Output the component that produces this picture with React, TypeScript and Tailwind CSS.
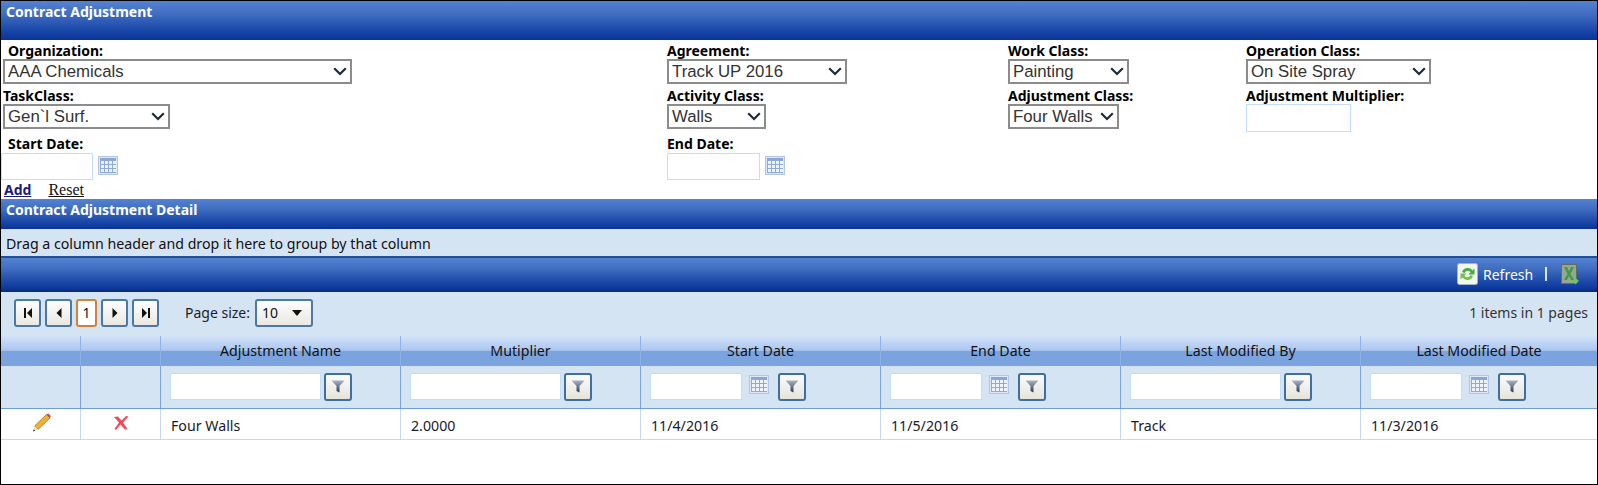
import React from "react";

const Chevron = () => (
  <svg width="14" height="9" viewBox="0 0 14 9" className="absolute right-[5px] top-[8px] pointer-events-none">
    <path d="M1.2 1.2 L7 7 L12.8 1.2" fill="none" stroke="#1f2a36" strokeWidth="2.2" />
  </svg>
);

const Sel = ({ v, w }: { v: string; w: string }) => (
  <div className={`relative h-[25px] ${w}`}>
    <select
      defaultValue={v}
      className="w-full h-full appearance-none bg-white border-2 border-[#8c8c8c] pl-[3px] text-[16.8px] leading-[21px] text-[#333] font-['Liberation_Sans',sans-serif] outline-none"
    >
      <option>{v}</option>
    </select>
    <Chevron />
  </div>
);

const Label = ({ children, cls = "" }: { children: React.ReactNode; cls?: string }) => (
  <div className={`text-[14px] leading-[17px] font-bold text-black ${cls}`}>{children}</div>
);

const Calendar = () => (
  <svg width="20" height="19" viewBox="0 0 20 19" className="shrink-0">
    <rect x="0.5" y="0.5" width="19" height="18" fill="#dfe7f5" stroke="#b4c5e4" />
    <rect x="2" y="2" width="16" height="2" fill="#8ba6d6" />
    <rect x="2" y="4" width="16" height="13" fill="#8fa9d9" />
    {[3, 7, 11, 15].map((x) =>
      [5, 9, 13].map((y) => <rect key={`${x}-${y}`} x={x} y={y} width="3" height="3" fill="#eef2fb" />)
    )}
  </svg>
);

const FilterBtn = () => (
  <button className="w-[28px] h-[28px] rounded-[3px] border-2 border-[#3f6f9f] bg-[linear-gradient(#fbfbfb,#e6e3da)] flex items-center justify-center shrink-0">
    <svg width="14" height="13" viewBox="0 0 14 13">
      <defs>
        <linearGradient id="fg" x1="0" y1="0" x2="0" y2="1">
          <stop offset="0" stopColor="#a9b6c4" />
          <stop offset="1" stopColor="#27394d" />
        </linearGradient>
      </defs>
      <path d="M0.5 0.5 H13.5 L8.5 6 V12.5 L5.5 11 V6 Z" fill="url(#fg)" />
    </svg>
  </button>
);

const PagerBtn = ({ d }: { d: React.ReactNode }) => (
  <button className="w-[27px] h-[28px] rounded-[3px] border-2 border-[#4a79a5] bg-[linear-gradient(#fdfdfd,#ebe8e1)] flex items-center justify-center">
    <svg width="12" height="12" viewBox="0 0 12 12" fill="#111">{d}</svg>
  </button>
);

const bar = "bg-[linear-gradient(#5582d2_0%,#3e6cc0_35%,#1a48a8_75%,#0a3399_100%)]";

const columns = [
  { name: "Adjustment Name", val: "Four Walls", date: false },
  { name: "Mutiplier", val: "2.0000", date: false },
  { name: "Start Date", val: "11/4/2016", date: true },
  { name: "End Date", val: "11/5/2016", date: true },
  { name: "Last Modified By", val: "Track", date: false },
  { name: "Last Modified Date", val: "11/3/2016", date: true },
];

const gridCols = "grid grid-cols-[80px_80px_240px_240px_240px_240px_240px_1fr]";

export default function App() {
  return (
    <div className="w-[1598px] h-[485px] overflow-hidden border border-black bg-white font-['Noto_Sans',sans-serif] flex flex-col">
      <div className={`h-[39px] shrink-0 ${bar} text-white font-bold text-[14px] leading-[20px] pl-[5px] pt-[1px]`}>
        Contract Adjustment
      </div>

      <div className="h-[159px] shrink-0 flex flex-col">
        <div className="grid grid-cols-[666px_341px_238px_1fr] pt-[2px] flex-1">
          <div className="pl-[2px]">
            <Label cls="pl-[5px]">Organization:</Label>
            <Sel v="AAA Chemicals" w="w-[349px]" />
            <Label cls="pt-[3px] h-[20px]">TaskClass:</Label>
            <Sel v="Gen`l Surf." w="w-[167px]" />
            <Label cls="pl-[5px] pt-[6px] h-[24px]">Start Date:</Label>
            <div className="flex items-center gap-[5px] -ml-[2px]">
              <input className="w-[92px] h-[27px] border border-[#c5dcfb] bg-white" />
              <span className="flex mb-[2px]"><Calendar /></span>
            </div>
          </div>
          <div>
            <Label>Agreement:</Label>
            <Sel v="Track UP 2016" w="w-[180px]" />
            <Label cls="pt-[3px] h-[20px]">Activity Class:</Label>
            <Sel v="Walls" w="w-[99px]" />
            <Label cls="pt-[6px] h-[24px]">End Date:</Label>
            <div className="flex items-center gap-[5px]">
              <input className="w-[93px] h-[27px] border border-[#c5dcfb] bg-white" />
              <span className="flex mb-[2px]"><Calendar /></span>
            </div>
          </div>
          <div>
            <Label>Work Class:</Label>
            <Sel v="Painting" w="w-[121px]" />
            <Label cls="pt-[3px] h-[20px]">Adjustment Class:</Label>
            <Sel v="Four Walls" w="w-[111px]" />
          </div>
          <div>
            <Label>Operation Class:</Label>
            <Sel v="On Site Spray" w="w-[185px]" />
            <Label cls="pt-[3px] h-[20px]">Adjustment Multiplier:</Label>
            <input className="block w-[105px] h-[28px] border border-[#c5dcfb] bg-white" />
          </div>
        </div>
        <div className="flex items-baseline gap-[17px] pl-[3px] h-[17px] leading-[15px]">
          <a className="text-[14px] font-bold underline text-[#1a1a7e]">Add</a>
          <a className="text-[16px] underline text-[#111] font-['Liberation_Serif',serif]">Reset</a>
        </div>
      </div>

      <div className={`h-[30px] shrink-0 ${bar} text-white font-bold text-[14px] leading-[20px] pl-[5px] pt-[1px]`}>
        Contract Adjustment Detail
      </div>

      <div className="h-[29px] shrink-0 bg-[#d5e4f3] border-b-[2px] border-[#1f4f94] text-[14.2px] leading-[30px] text-[#111] pl-[5px]">
        Drag a column header and drop it here to group by that column
      </div>

      <div className={`h-[34px] shrink-0 ${bar} border-b-[2px] border-[#0b2f80] flex items-center justify-end text-white text-[14px]`}>
        <svg width="21" height="22" viewBox="0 0 21 22" className="mr-[5px]">
          <rect x="0.5" y="0.5" width="20" height="21" rx="2" fill="#f4f6ee" stroke="#9fb3cf" />
          <path d="M5 9 A6 6 0 0 1 15.5 7.5 L17.5 5.5 V11.5 H11.5 L13.7 9.3 A3.5 3.5 0 0 0 7.5 10 Z" fill="#45ad3f" />
          <path d="M16 13 A6 6 0 0 1 5.5 14.5 L3.5 16.5 V10.5 H9.5 L7.3 12.7 A3.5 3.5 0 0 0 13.5 12 Z" fill="#6cc24f" />
        </svg>
        <span className="w-[49px]">Refresh</span>
        <span className="w-[2px] h-[14px] bg-[#dce6f5] ml-[13px] mr-[14px]" />
        <svg width="18" height="21" viewBox="0 0 18 21" className="mr-[18px]">
          <rect x="0.5" y="0.5" width="15" height="19" fill="#98a890" stroke="#5e6e66" />
          <path d="M3 3 L6 3 L8 7 L10 3 L13 3 L9.5 10 L13 16 L10 16 L8 12 L6 16 L3 16 L6.5 10 Z" fill="#3f9a4a" />
          <path d="M10 16 H14 V13.5 L18 17 L14 20.5 V18 H10 Z" fill="#5fcf4f" />
        </svg>
      </div>

      <div className="h-[43px] shrink-0 bg-[#d5e4f3] flex items-center pl-[13px] pr-[9px] text-[14px] text-[#222] pb-[2px]">
        <div className="flex gap-[4px]">
          <PagerBtn d={<><rect x="2" y="1" width="2" height="10" /><path d="M10 1 V11 L5 6 Z" /></>} />
          <PagerBtn d={<path d="M8.5 1 V11 L3.5 6 Z" />} />
          <div className="w-[21px] h-[28px] rounded-[3px] border-2 border-[#d0813a] bg-white flex items-center justify-center text-[14px] text-[#111]">1</div>
          <PagerBtn d={<path d="M3.5 1 V11 L8.5 6 Z" />} />
          <PagerBtn d={<><rect x="8" y="1" width="2" height="10" /><path d="M2 1 V11 L7 6 Z" /></>} />
        </div>
        <span className="ml-[26px] mr-[5px] text-[#1c1c2c]">Page size:</span>
        <div className="relative w-[58px] h-[28px] rounded-[3px] border-2 border-[#4a79a5] bg-[linear-gradient(#fdfdfd,#ebe8e1)] flex items-center pl-[5px] text-[#111]">
          10
          <svg width="12" height="7" viewBox="0 0 12 7" className="absolute right-[8px] top-[9px]">
            <path d="M1 0 H11 L6 6 Z" fill="#111" />
          </svg>
        </div>
        <span className="ml-auto text-[#333]">1 items in 1 pages</span>
      </div>

      <div className={`${gridCols} h-[31px] shrink-0 text-[14.2px] text-[#111] bg-[linear-gradient(#d2e2f9_0%,#abc6f0_48%,#7ba4df_50%,#7ba4df_100%)] border-t border-[#d5e4f3]`}>
        <div className="border-r border-[#8fb0e5]" />
        <div className="border-r border-[#8fb0e5]" />
        {columns.map((c, i) => (
          <div key={c.name} className={`text-center leading-[30px] ${i < 5 ? "border-r border-[#8fb0e5]" : ""}`}>
            {c.name}
          </div>
        ))}
      </div>

      <div className={`${gridCols} h-[43px] shrink-0 bg-[#d5e4f3] border-b border-[#6f9be0]`}>
        <div className="border-r border-[#7ba4e0]" />
        <div className="border-r border-[#7ba4e0]" />
        {columns.map((c, i) => (
          <div key={c.name} className={`flex items-center pl-[9px] pb-[1px] ${i < 5 ? "border-r border-[#7ba4e0]" : ""}`}>
            <input className={`${c.date ? "w-[92px]" : "w-[151px]"} h-[27px] border border-[#c5dcfb] bg-white`} />
            {c.date && <span className="ml-[7px] mr-[9px] flex mb-[4px]"><Calendar /></span>}
            {!c.date && <span className="w-[3px]" />}
            <FilterBtn />
          </div>
        ))}
      </div>

      <div className={`${gridCols} h-[31px] shrink-0 bg-white border-b border-[#c5d8f0] text-[14.2px] text-[#1a1a2a]`}>
        <div className="border-r border-[#c5d8f0] flex justify-center pt-[4px]">
          <svg width="20" height="20" viewBox="0 0 20 20" className="-mr-[2px]">
            <path d="M14.5 1.5 L18 5 L6 16.5 L2.5 13 Z" fill="#f0b030" stroke="#9a6a1b" strokeWidth="0.7" />
            <path d="M14.5 1.5 L16.2 0.6 L18.8 3 L18 5 Z" fill="#c9414c" />
            <path d="M2.5 13 L6 16.5 L1 18.5 Z" fill="#f1dcb8" />
            <path d="M1 18.5 L1.8 16.4 L3.3 17.6 Z" fill="#222" />
          </svg>
        </div>
        <div className="border-r border-[#c5d8f0] flex justify-center pt-[6px]">
          <svg width="16" height="16" viewBox="0 0 16 16">
            <path d="M1 2 L5 1.5 L8.5 5.5 L13 1 L15.5 1.5 L10 7.5 L14.5 14 L12 14.5 L7.5 9.5 L3 15 L1.5 14 L6 7.5 Z" fill="#f04a5a" />
          </svg>
        </div>
        {columns.map((c, i) => (
          <div key={c.name} className={`pl-[10px] pt-[3px] leading-[27px] ${i < 5 ? "border-r border-[#c5d8f0]" : ""}`}>
            {c.val}
          </div>
        ))}
      </div>
    </div>
  );
}
